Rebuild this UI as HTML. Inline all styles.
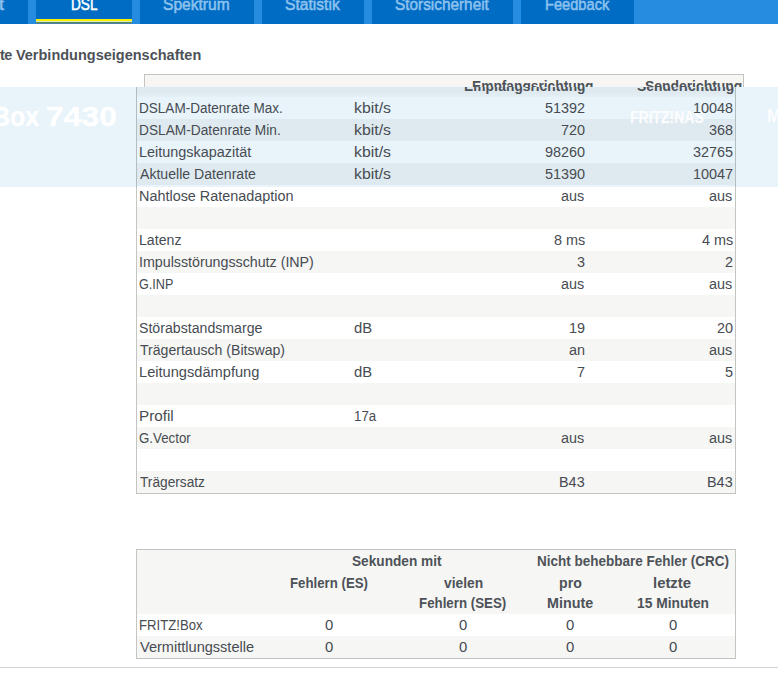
<!DOCTYPE html><html><head><meta charset="utf-8"><style>
html,body{margin:0;padding:0;width:778px;height:683px;overflow:hidden;background:#fff;position:relative}
body{font-family:"Liberation Sans",sans-serif;color:#474c52}
.b{position:absolute;box-sizing:border-box}
.t{position:absolute;white-space:nowrap;transform-origin:0 0}
.clip{position:absolute;left:0;width:778px;overflow:hidden}
.tt{position:absolute;top:-6px;font-size:17px;line-height:22px;white-space:nowrap;transform-origin:0 0;-webkit-text-stroke:0.55px currentColor}
</style></head><body>
<div class="clip" style="top:0;height:87px">
<div class="b" style="left:0px;top:0px;width:778px;height:24px;background:#268ce0"></div>
<div class="b" style="left:0px;top:0px;width:28px;height:24px;background:#006cc4"></div>
<div class="b" style="left:36px;top:0px;width:96px;height:24px;background:#006cc4"></div>
<div class="b" style="left:140px;top:0px;width:114px;height:24px;background:#006cc4"></div>
<div class="b" style="left:262px;top:0px;width:102px;height:24px;background:#006cc4"></div>
<div class="b" style="left:372px;top:0px;width:141px;height:24px;background:#006cc4"></div>
<div class="b" style="left:521px;top:0px;width:113px;height:24px;background:#006cc4"></div>
<div class="b" style="left:36px;top:19px;width:96px;height:2px;background:#fbee00"></div>
<div class="b" style="left:36px;top:21px;width:96px;height:1px;background:#d4ecb8"></div>
<div class="b" style="left:36px;top:22px;width:96px;height:1px;background:#568c52"></div>
<div class="b" style="left:36px;top:23px;width:96px;height:1px;background:#4f7eac"></div>
<div class="tt" style="left:-1.01px;transform:scaleX(1.0556);color:#8ec2ee">t</div>
<div class="tt" style="left:70.60px;transform:scaleX(0.8000);color:#fff">DSL</div>
<div class="tt" style="left:163.31px;transform:scaleX(0.9155);color:#8ec2ee">Spektrum</div>
<div class="tt" style="left:285.31px;transform:scaleX(0.9191);color:#8ec2ee">Statistik</div>
<div class="tt" style="left:395.32px;transform:scaleX(0.9029);color:#8ec2ee">Störsicherheit</div>
<div class="tt" style="left:544.62px;transform:scaleX(0.8612);color:#8ec2ee">Feedback</div>
<div class="t" style="left:3px;top:44px;font-size:14.5px;line-height:22px;font-weight:bold;color:#4d5258"><span style="margin-left:-3px;letter-spacing:-0.5px">te</span> Verbindungseigenschaften</div>
<div class="b" style="left:144px;top:74px;width:600px;height:30px;border:1px solid #c4c4c0;background:linear-gradient(#f7f7f6 0px,#f8f6f3 4px,#f8f6f3 9px,#f1f6f9 12px)"></div>
<div class="t" style="left:472.35px;top:75px;font-size:14.5px;line-height:22px;font-weight:bold;color:#4d5258;transform:scaleX(0.9481)">Empfangsrichtung</div>
<div class="t" style="left:644.72px;top:75px;font-size:14.5px;line-height:22px;font-weight:bold;color:#4d5258;transform:scaleX(0.9580)">Senderichtung</div>
</div>
<div class="b" style="left:136px;top:87px;width:600px;height:407px;border:1px solid #c4c4c0;border-top:none;background:#fff"></div>
<div class="b" style="left:137px;top:87px;width:598px;height:10px;background:linear-gradient(#f6f6f4 0px,#f6f6f4 5px,#fbfbfb 10px)"></div>
<div class="b" style="left:137px;top:119px;width:598px;height:22px;background:#f6f6f4"></div>
<div class="b" style="left:137px;top:163px;width:598px;height:22px;background:#f6f6f4"></div>
<div class="b" style="left:137px;top:207px;width:598px;height:22px;background:#f6f6f4"></div>
<div class="b" style="left:137px;top:251px;width:598px;height:22px;background:#f6f6f4"></div>
<div class="b" style="left:137px;top:295px;width:598px;height:22px;background:#f6f6f4"></div>
<div class="b" style="left:137px;top:339px;width:598px;height:22px;background:#f6f6f4"></div>
<div class="b" style="left:137px;top:383px;width:598px;height:22px;background:#f6f6f4"></div>
<div class="b" style="left:137px;top:427px;width:598px;height:22px;background:#f6f6f4"></div>
<div class="b" style="left:137px;top:471px;width:598px;height:22px;background:#f6f6f4"></div>
<div class="b" style="left:0px;top:87px;width:778px;height:100px;background:rgba(0,125,200,0.09)"></div>
<div class="clip" style="top:87px;height:10px">
<div class="t" style="left:464.35px;top:-12px;font-size:14.5px;line-height:22px;font-weight:bold;color:#4d5258;transform:scaleX(0.9481)">Empfangsrichtung</div>
<div class="t" style="left:636.72px;top:-12px;font-size:14.5px;line-height:22px;font-weight:bold;color:#4d5258;transform:scaleX(0.9580)">Senderichtung</div>
</div>
<div class="t" style="left:-7.54px;top:99px;font-size:28.5px;line-height:34.5px;font-weight:bold;color:#fff;transform:scaleX(0.8773);-webkit-text-stroke:0.4px #fff">Box</div>
<div class="t" style="left:46.00px;top:99px;font-size:28.5px;line-height:34.5px;font-weight:bold;color:#fff;transform:scaleX(1.1197);-webkit-text-stroke:0.4px #fff">7430</div>
<div class="t" style="left:629.65px;top:105.5px;font-size:16.5px;line-height:22.5px;font-weight:bold;color:rgba(255,255,255,0.88);transform:scaleX(0.8468);-webkit-text-stroke:0.25px rgba(255,255,255,0.88)">FRITZ!NAS</div>
<div class="t" style="left:766.76px;top:105px;font-size:17.5px;line-height:23.5px;font-weight:bold;color:rgba(255,255,255,0.9);transform:scaleX(0.9390);-webkit-text-stroke:0px rgba(255,255,255,0.9)">MyFRITZ!</div>
<div class="b" style="left:136px;top:549px;width:600px;height:110px;border:1px solid #c4c4c0;background:#fff"></div>
<div class="b" style="left:137px;top:550px;width:598px;height:64px;background:#f6f6f4"></div>
<div class="b" style="left:137px;top:636px;width:598px;height:22px;background:#f6f6f4"></div>
<div class="b" style="left:0px;top:667px;width:778px;height:1px;background:#d4d4d4"></div>
<div class="t" style="left:139.01px;top:97px;font-size:15.5px;line-height:22px;transform:scaleX(0.8741);">DSLAM-Datenrate Max.</div>
<div class="t" style="left:354.38px;top:97px;font-size:15.5px;line-height:22px;transform:scaleX(1.0216);">kbit/s</div>
<div class="t" style="left:544.68px;top:97px;font-size:15.5px;line-height:22px;transform:scaleX(0.9300);">51392</div>
<div class="t" style="left:692.68px;top:97px;font-size:15.5px;line-height:22px;transform:scaleX(0.9300);">10048</div>
<div class="t" style="left:138.99px;top:119px;font-size:15.5px;line-height:22px;transform:scaleX(0.8849);">DSLAM-Datenrate Min.</div>
<div class="t" style="left:354.38px;top:119px;font-size:15.5px;line-height:22px;transform:scaleX(1.0216);">kbit/s</div>
<div class="t" style="left:560.72px;top:119px;font-size:15.5px;line-height:22px;transform:scaleX(0.9300);">720</div>
<div class="t" style="left:708.72px;top:119px;font-size:15.5px;line-height:22px;transform:scaleX(0.9300);">368</div>
<div class="t" style="left:138.94px;top:141px;font-size:15.5px;line-height:22px;transform:scaleX(0.9300);">Leitungskapazität</div>
<div class="t" style="left:354.38px;top:141px;font-size:15.5px;line-height:22px;transform:scaleX(1.0216);">kbit/s</div>
<div class="t" style="left:544.68px;top:141px;font-size:15.5px;line-height:22px;transform:scaleX(0.9300);">98260</div>
<div class="t" style="left:692.68px;top:141px;font-size:15.5px;line-height:22px;transform:scaleX(0.9300);">32765</div>
<div class="t" style="left:140.10px;top:163px;font-size:15.5px;line-height:22px;transform:scaleX(0.9089);">Aktuelle Datenrate</div>
<div class="t" style="left:354.38px;top:163px;font-size:15.5px;line-height:22px;transform:scaleX(1.0216);">kbit/s</div>
<div class="t" style="left:544.68px;top:163px;font-size:15.5px;line-height:22px;transform:scaleX(0.9300);">51390</div>
<div class="t" style="left:692.68px;top:163px;font-size:15.5px;line-height:22px;transform:scaleX(0.9300);">10047</div>
<div class="t" style="left:138.94px;top:185px;font-size:15.5px;line-height:22px;transform:scaleX(0.9293);">Nahtlose Ratenadaption</div>
<div class="t" style="left:561.42px;top:185px;font-size:15.5px;line-height:22px;transform:scaleX(0.9300);">aus</div>
<div class="t" style="left:709.42px;top:185px;font-size:15.5px;line-height:22px;transform:scaleX(0.9300);">aus</div>
<div class="t" style="left:138.96px;top:229px;font-size:15.5px;line-height:22px;transform:scaleX(0.9124);">Latenz</div>
<div class="t" style="left:553.51px;top:229px;font-size:15.5px;line-height:22px;transform:scaleX(0.9300);">8 ms</div>
<div class="t" style="left:701.51px;top:229px;font-size:15.5px;line-height:22px;transform:scaleX(0.9300);">4 ms</div>
<div class="t" style="left:138.95px;top:251px;font-size:15.5px;line-height:22px;transform:scaleX(0.9185);">Impulsstörungsschutz (INP)</div>
<div class="t" style="left:576.76px;top:251px;font-size:15.5px;line-height:22px;transform:scaleX(0.9300);">3</div>
<div class="t" style="left:724.76px;top:251px;font-size:15.5px;line-height:22px;transform:scaleX(0.9300);">2</div>
<div class="t" style="left:139.49px;top:273px;font-size:15.5px;line-height:22px;transform:scaleX(0.8147);">G.INP</div>
<div class="t" style="left:561.42px;top:273px;font-size:15.5px;line-height:22px;transform:scaleX(0.9300);">aus</div>
<div class="t" style="left:709.42px;top:273px;font-size:15.5px;line-height:22px;transform:scaleX(0.9300);">aus</div>
<div class="t" style="left:139.42px;top:317px;font-size:15.5px;line-height:22px;transform:scaleX(0.9121);">Störabstandsmarge</div>
<div class="t" style="left:354.22px;top:317px;font-size:15.5px;line-height:22px;transform:scaleX(0.9577);">dB</div>
<div class="t" style="left:568.86px;top:317px;font-size:15.5px;line-height:22px;transform:scaleX(0.9300);">19</div>
<div class="t" style="left:716.62px;top:317px;font-size:15.5px;line-height:22px;transform:scaleX(0.9300);">20</div>
<div class="t" style="left:139.87px;top:339px;font-size:15.5px;line-height:22px;transform:scaleX(0.9085);">Trägertausch (Bitswap)</div>
<div class="t" style="left:569.09px;top:339px;font-size:15.5px;line-height:22px;transform:scaleX(0.9300);">an</div>
<div class="t" style="left:709.42px;top:339px;font-size:15.5px;line-height:22px;transform:scaleX(0.9300);">aus</div>
<div class="t" style="left:138.92px;top:361px;font-size:15.5px;line-height:22px;transform:scaleX(0.9437);">Leitungsdämpfung</div>
<div class="t" style="left:354.22px;top:361px;font-size:15.5px;line-height:22px;transform:scaleX(0.9577);">dB</div>
<div class="t" style="left:576.76px;top:361px;font-size:15.5px;line-height:22px;transform:scaleX(0.9300);">7</div>
<div class="t" style="left:724.76px;top:361px;font-size:15.5px;line-height:22px;transform:scaleX(0.9300);">5</div>
<div class="t" style="left:138.87px;top:405px;font-size:15.5px;line-height:22px;transform:scaleX(0.9818);">Profil</div>
<div class="t" style="left:354.34px;top:405px;font-size:15.5px;line-height:22px;transform:scaleX(0.8560);">17a</div>
<div class="t" style="left:139.46px;top:427px;font-size:15.5px;line-height:22px;transform:scaleX(0.8574);">G.Vector</div>
<div class="t" style="left:561.42px;top:427px;font-size:15.5px;line-height:22px;transform:scaleX(0.9300);">aus</div>
<div class="t" style="left:709.42px;top:427px;font-size:15.5px;line-height:22px;transform:scaleX(0.9300);">aus</div>
<div class="t" style="left:139.88px;top:471px;font-size:15.5px;line-height:22px;transform:scaleX(0.8828);">Trägersatz</div>
<div class="t" style="left:559.09px;top:471px;font-size:15.5px;line-height:22px;transform:scaleX(0.9300);">B43</div>
<div class="t" style="left:707.09px;top:471px;font-size:15.5px;line-height:22px;transform:scaleX(0.9300);">B43</div>
<div class="t" style="left:351.53px;top:550px;font-size:14.5px;line-height:22px;transform:scaleX(0.9418);font-weight:bold;color:#4d5258;">Sekunden mit</div>
<div class="t" style="left:536.57px;top:550px;font-size:14.5px;line-height:22px;transform:scaleX(0.9311);font-weight:bold;color:#4d5258;">Nicht behebbare Fehler (CRC)</div>
<div class="t" style="left:289.89px;top:572px;font-size:14.5px;line-height:22px;transform:scaleX(0.9134);font-weight:bold;color:#4d5258;">Fehlern (ES)</div>
<div class="t" style="left:443.60px;top:572px;font-size:14.5px;line-height:22px;transform:scaleX(0.9540);font-weight:bold;color:#4d5258;">vielen</div>
<div class="t" style="left:558.63px;top:572px;font-size:14.5px;line-height:22px;transform:scaleX(0.9747);font-weight:bold;color:#4d5258;">pro</div>
<div class="t" style="left:653.27px;top:572px;font-size:14.5px;line-height:22px;transform:scaleX(1.0266);font-weight:bold;color:#4d5258;">letzte</div>
<div class="t" style="left:419.48px;top:592px;font-size:14.5px;line-height:22px;transform:scaleX(0.9176);font-weight:bold;color:#4d5258;">Fehlern (SES)</div>
<div class="t" style="left:547.31px;top:592px;font-size:14.5px;line-height:22px;transform:scaleX(0.9878);font-weight:bold;color:#4d5258;">Minute</div>
<div class="t" style="left:636.69px;top:592px;font-size:14.5px;line-height:22px;transform:scaleX(0.9508);font-weight:bold;color:#4d5258;">15 Minuten</div>
<div class="t" style="left:138.54px;top:614px;font-size:15.5px;line-height:22px;transform:scaleX(0.8490);">FRITZ!Box</div>
<div class="t" style="left:139.60px;top:636px;font-size:15.5px;line-height:22px;transform:scaleX(0.9391);">Vermittlungsstelle</div>
<div class="t" style="left:324.92px;top:614px;font-size:15.5px;line-height:22px;transform:scaleX(0.9600);">0</div>
<div class="t" style="left:458.92px;top:614px;font-size:15.5px;line-height:22px;transform:scaleX(0.9600);">0</div>
<div class="t" style="left:566.42px;top:614px;font-size:15.5px;line-height:22px;transform:scaleX(0.9600);">0</div>
<div class="t" style="left:668.62px;top:614px;font-size:15.5px;line-height:22px;transform:scaleX(0.9600);">0</div>
<div class="t" style="left:324.92px;top:636px;font-size:15.5px;line-height:22px;transform:scaleX(0.9600);">0</div>
<div class="t" style="left:458.92px;top:636px;font-size:15.5px;line-height:22px;transform:scaleX(0.9600);">0</div>
<div class="t" style="left:566.42px;top:636px;font-size:15.5px;line-height:22px;transform:scaleX(0.9600);">0</div>
<div class="t" style="left:668.62px;top:636px;font-size:15.5px;line-height:22px;transform:scaleX(0.9600);">0</div>
</body></html>
